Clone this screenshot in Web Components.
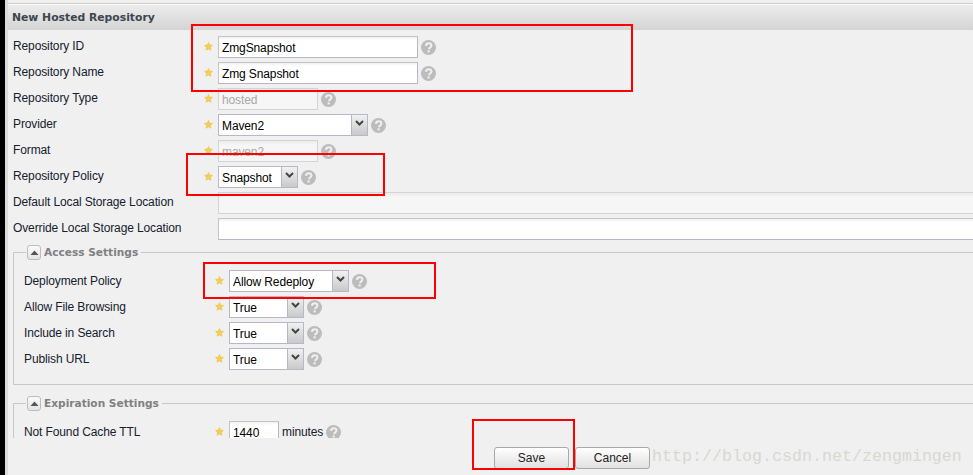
<!DOCTYPE html>
<html>
<head>
<meta charset="utf-8">
<style>
html, body { margin: 0; padding: 0; height: 100%; overflow: hidden; background: #f0f0f0; }
body { font-family: "Liberation Sans", sans-serif; font-size: 12px; letter-spacing: -0.12px; color: #15212e; }
</style>
</head>
<body>
<template id="page-frame-tpl">
  <style>
    :host { display: flex; height: 475px; }
    .edge { width: 5px; flex: none; background: #000; }
    .side { width: 3px; flex: none; background: #dcdcdc; }
    .main { flex: 1; min-width: 0; }
  </style>
  <div class="edge"></div>
  <div class="side"></div>
  <div class="main"><slot></slot></div>
</template>

<template id="field-row-tpl">
  <style>
    :host { display: flex; align-items: center; height: 26px; }
    .label { width: 190px; flex: none; padding-top: var(--label-nudge, 0); }
    .star { width: 14px; padding-left: 1px; flex: none; display: flex; }
    .ctl { display: flex; align-items: center; gap: 3px; position: relative; top: 1px; }
    svg { display: block; }
  </style>
  <div class="label"><slot name="label"></slot></div>
  <div class="star"></div>
  <div class="ctl"><slot></slot></div>
</template>

<template id="help-icon-tpl">
  <style>
    :host { display: inline-flex; width: 15px; height: 15px; flex: none; }
    svg { display: block; }
  </style>
  <svg width="15" height="15" viewBox="0 0 15 15">
    <circle cx="7.5" cy="7.5" r="7.5" fill="#bcbcbc"/>
    <path d="M4.9 5.8c.2-1.6 1.3-2.5 2.8-2.5 1.5 0 2.7.9 2.7 2.3 0 1-.6 1.5-1.3 2-.7.4-1 .8-1 1.6" fill="none" stroke="#f0f0f0" stroke-width="2"/>
    <rect x="6.6" y="10.3" width="2.1" height="2.1" fill="#f0f0f0"/>
  </svg>
</template>

<template id="text-box-tpl">
  <style>
    :host { display: inline-flex; box-sizing: border-box; height: 22px; width: 200px; background: linear-gradient(#f0f0f0, #fff 3px); border: 1px solid #c4c4c4; border-right-color: #b5b8c8; border-bottom-color: #b5b8c8; align-items: center; padding: 1px 3px 0; font-size: 12px; color: #000; overflow: hidden; }
    :host([disabled]) { background: linear-gradient(#ececec, #f6f6f6 4px); border-color: #d4d4d4; color: #a8a8a8; }
  </style>
  <slot></slot>
</template>

<template id="combo-box-tpl">
  <style>
    :host { display: inline-flex; box-sizing: border-box; height: 22px; background: #fff; border: 1px solid #b5b8c8; font-size: 12px; color: #000; }
    .val { flex: 1; padding: 1px 3px 0; display: flex; align-items: center; white-space: nowrap; }
    .btn { width: 16px; flex: none; background: linear-gradient(#f1f1f1, #c9c9c9); border-left: 1px solid #b5b8c8; display: flex; align-items: flex-start; justify-content: center; padding-top: 5px; box-sizing: border-box; }
  </style>
  <div class="val"><slot></slot></div>
  <div class="btn"><svg width="9" height="6" viewBox="0 0 9 6"><path d="M1 1l3.5 3.5L8 1" fill="none" stroke="#444" stroke-width="2"/></svg></div>
</template>

<template id="settings-group-tpl">
  <style>
    :host { display: block; border: 1px solid #c8c8c8; border-right: 0; box-sizing: border-box; position: relative; --label-nudge: 2px; }
    .legend { display: flex; align-items: center; gap: 3px; position: absolute; top: -9px; left: 12px; height: 16px; padding: 0 3px 0 1px; background: #f0f0f0; font-family: "DejaVu Sans", sans-serif; font-weight: bold; font-size: 10.6px; letter-spacing: 0; color: #808080; }
    .toggle { width: 12px; height: 13px; border: 1px solid #bcbcbc; border-radius: 3px; background: linear-gradient(#fafafa, #e4e4e4); display: flex; align-items: center; justify-content: center; }
    .body { padding: 14px 0 0 10px; }
  </style>
  <div class="legend">
    <span class="toggle"><svg width="9" height="5" viewBox="0 0 9 5"><path d="M0.5 5L4.5 0.5 8.5 5z" fill="#555"/></svg></span>
    <span><slot name="title"></slot></span>
  </div>
  <div class="body"><slot></slot></div>
</template>

<template id="push-button-tpl">
  <style>
    :host { display: inline-flex; box-sizing: border-box; width: 75px; height: 22px; align-items: center; justify-content: center; border: 1px solid #a8a8a8; border-radius: 3px; background: linear-gradient(#ffffff, #ececec 60%, #e2e2e2); font-family: "Liberation Sans", sans-serif; font-size: 12px; letter-spacing: 0; color: #222; }
  </style>
  <slot></slot>
</template>

<template id="repo-form-tpl">
  <style>
    :host { display: flex; flex-direction: column; margin-top: 3px; border-top: 1px solid #cfcfcf; }
    .title { height: 26px; flex: none; box-sizing: border-box; border-top: 1px solid #fafafa; background: linear-gradient(#ececec, #d4d4d4); display: flex; align-items: center; padding-left: 4px; font-family: "DejaVu Sans", sans-serif; font-weight: bold; font-size: 10.8px; letter-spacing: 0; color: #3c4650; }
    .scroll { height: 408px; flex: none; overflow: hidden; padding: 3px 0 0 5px; box-sizing: border-box; }
    .footer { flex: none; display: flex; gap: 6px; padding: 9px 0 0 486px; }
  </style>
  <div class="title"><slot name="title"></slot></div>
  <div class="scroll"><slot></slot></div>
  <div class="footer"><slot name="actions"></slot></div>
</template>

<template id="red-mark-tpl">
  <style>
    :host { display: block; position: absolute; box-sizing: border-box; border: 2px solid #f00; pointer-events: none; }
  </style>
</template>

<page-frame>
<repo-form>
  <span slot="title">New Hosted Repository</span>

  <field-row><span slot="label">Repository ID</span><text-box>ZmgSnapshot</text-box><help-icon></help-icon></field-row>
  <field-row><span slot="label">Repository Name</span><text-box>Zmg Snapshot</text-box><help-icon></help-icon></field-row>
  <field-row><span slot="label">Repository Type</span><text-box disabled style="width:100px">hosted</text-box><help-icon></help-icon></field-row>
  <field-row><span slot="label">Provider</span><combo-box style="width:150px">Maven2</combo-box><help-icon></help-icon></field-row>
  <field-row><span slot="label">Format</span><text-box disabled style="width:100px">maven2</text-box><help-icon></help-icon></field-row>
  <field-row><span slot="label">Repository Policy</span><combo-box style="width:80px">Snapshot</combo-box><help-icon></help-icon></field-row>
  <field-row nostar><span slot="label">Default Local Storage Location</span><text-box disabled style="width:760px"></text-box></field-row>
  <field-row nostar><span slot="label">Override Local Storage Location</span><text-box style="width:760px"></text-box></field-row>

  <settings-group style="margin-top:11px;height:133px">
    <span slot="title">Access Settings</span>
    <field-row><span slot="label">Deployment Policy</span><combo-box style="width:120px">Allow Redeploy</combo-box><help-icon></help-icon></field-row>
    <field-row><span slot="label">Allow File Browsing</span><combo-box style="width:75px">True</combo-box><help-icon></help-icon></field-row>
    <field-row><span slot="label">Include in Search</span><combo-box style="width:75px">True</combo-box><help-icon></help-icon></field-row>
    <field-row><span slot="label">Publish URL</span><combo-box style="width:75px">True</combo-box><help-icon></help-icon></field-row>
  </settings-group>

  <settings-group style="margin-top:18px;height:60px">
    <span slot="title">Expiration Settings</span>
    <field-row><span slot="label">Not Found Cache TTL</span><text-box style="width:50px">1440</text-box><span>minutes</span><help-icon></help-icon></field-row>
  </settings-group>

  <push-button slot="actions">Save</push-button>
  <push-button slot="actions">Cancel</push-button>
</repo-form>
</page-frame>

<red-mark style="left:191px;top:24px;width:442px;height:68px"></red-mark>
<red-mark style="left:186px;top:153px;width:199px;height:43px"></red-mark>
<red-mark style="left:203px;top:262px;width:233px;height:37px"></red-mark>
<red-mark style="left:472px;top:419px;width:103px;height:51px"></red-mark>
<water-mark>http://blog.csdn.net/zengmingen</water-mark>

<script>
const starSvg = `<svg width="9" height="9" viewBox="0 0 10 10"><path d="M5 .5l1.4 2.9 3.1.4-2.3 2.2.6 3.2L5 7.7 2.2 9.2l.6-3.2L.5 3.8l3.1-.4z" fill="#f5cf52" stroke="#eab93a" stroke-width=".5"/></svg>`;

function simple(name, tplId) {
    customElements.define(name, class extends HTMLElement {
        constructor() {
            super();
            this.attachShadow({mode: 'open'});
            this.shadowRoot.append(document.getElementById(tplId).content.cloneNode(true));
        }
    });
}

customElements.define('field-row', class extends HTMLElement {
    constructor() {
        super();
        this.attachShadow({mode: 'open'});
        this.shadowRoot.append(document.getElementById('field-row-tpl').content.cloneNode(true));
    }
    connectedCallback() {
        // optional fields have no star
        if (!this.hasAttribute('nostar')) {
            this.shadowRoot.querySelector('.star').innerHTML = starSvg;
        }
    }
});

customElements.define('water-mark', class extends HTMLElement {
    constructor() {
        super();
        this.attachShadow({mode: 'open'});
        this.shadowRoot.innerHTML = `<style>
            :host { position: absolute; left: 652px; top: 447px; font-family: "Liberation Mono", monospace; font-size: 16.67px; letter-spacing: 0; color: #d8d8d2; white-space: nowrap; }
        </style><slot></slot>`;
    }
});

simple('page-frame', 'page-frame-tpl');
simple('help-icon', 'help-icon-tpl');
simple('text-box', 'text-box-tpl');
simple('combo-box', 'combo-box-tpl');
simple('settings-group', 'settings-group-tpl');
simple('push-button', 'push-button-tpl');
simple('repo-form', 'repo-form-tpl');
simple('red-mark', 'red-mark-tpl');
</script>
</body>
</html>
